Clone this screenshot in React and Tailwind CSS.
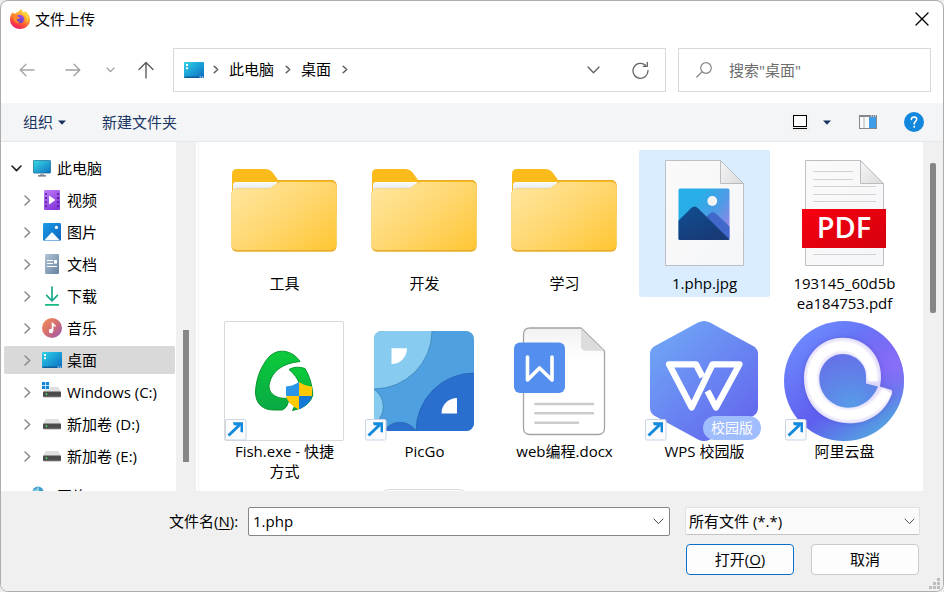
import React from 'react';

/* ---------- small line icons ---------- */

function Stroke({ w, h, d, className, sw = 1.3, join = 'round' }) {
  return (
    <svg width={w} height={h} viewBox={`0 0 ${w} ${h}`} fill="none" stroke="currentColor" strokeWidth={sw} strokeLinecap="round" strokeLinejoin={join} className={`shrink-0 ${className || ''}`} aria-hidden="true">
      <path d={d} />
    </svg>
  );
}

const ArrowLeft = () => <Stroke w={16} h={14} d="M15 7H1.5M7 1.2L1.2 7L7 12.8" className="text-[#a6a6a6]" />;
const ArrowRight = () => <Stroke w={16} h={14} d="M1 7h13.5M9 1.2L14.8 7L9 12.8" className="text-[#a0a0a0]" />;
const ArrowUp = () => <Stroke w={16} h={18} d="M8 17V1.8M1 8.5L8 1.5l7 7" className="text-[#5c5c5c]" sw={1.4} />;
const CrumbChevron = () => <Stroke w={6} h={9} d="M1.2 1.2L4.7 4.5L1.2 7.8" className="text-[#5a5a5a]" sw={1.5} />;
const TreeChevron = () => <Stroke w={7} h={11} d="M1 1l4.7 4.5L1 10" className="text-[#8a8a8a]" sw={1.5} />;
const ComboChevron = ({ className }) => <Stroke w={11} h={7} d="M1 1l4.5 4.6L10 1" className={className} sw={1} />;
const Caret = () => (
  <svg width="8" height="5" viewBox="0 0 8 5" aria-hidden="true"><path d="M0 0.5h8L4 4.7z" fill="#17335f" /></svg>
);

function Firefox() {
  return (
    <svg width="20" height="20" viewBox="0 0 20 20" aria-hidden="true">
      <defs>
        <linearGradient id="ffo" x1="0.8" y1="0" x2="0.3" y2="1">
          <stop offset="0" stopColor="#ffe14a" />
          <stop offset="0.4" stopColor="#ffa02a" />
          <stop offset="0.75" stopColor="#ff4a3c" />
          <stop offset="1" stopColor="#e8146e" />
        </linearGradient>
        <linearGradient id="ffi" x1="0.7" y1="0" x2="0.3" y2="1">
          <stop offset="0" stopColor="#a452ee" />
          <stop offset="1" stopColor="#5a3fb8" />
        </linearGradient>
      </defs>
      <path d="M2.6 3.2C3 4.2 4 4.6 5 4.7C6 3.5 7.4 3.3 8 3.3C8.600 2 9.800 1 11.600 0C11.600 1.600 12.600 2.400 14.200 3.400C14.600 2.900 14.800 2.500 14.800 2C18 4.200 20 7.200 20 10.800C20 16 15.600 20 10 20S0 16 0 10.600C0 7.600 1 5 2.600 3.200z" fill="url(#ffo)" />
      <path d="M10.500 1.500Q11.500 4.500 14.800 6.200Q18 9 16 14Q20 10 17.500 5.500Q16 4 14.800 3.400Q12 3.200 10.500 1.500z" fill="#ffd83f" />
      <path d="M7 6.600C8.600 5 12.200 5.400 13.600 8C14.900 10.900 13.200 14.200 10 14.200C7 14.200 5.400 12 5.800 9.600C6.800 10.200 8.600 10 9.600 8.900C8.600 8.700 7.400 7.800 7 6.600z" fill="url(#ffi)" />
      <path d="M3.200 8.200C4.600 6.400 7 6.800 9.900 8.700C8.800 10 7.600 10 6.600 10.200C6.800 12 8.400 13.200 10.400 12.600C8.600 15.400 3.600 13.600 3.200 8.200z" fill="#ff8a2c" />
    </svg>
  );
}

function DesktopIcon({ id }) {
  return (
    <svg width="20" height="16" viewBox="0 0 20 16" className="shrink-0" aria-hidden="true">
      <defs>
        <linearGradient id={id} x1="0" y1="0" x2="1" y2="1">
          <stop offset="0" stopColor="#30d3e4" />
          <stop offset="0.5" stopColor="#1a9fd6" />
          <stop offset="1" stopColor="#0f68bd" />
        </linearGradient>
      </defs>
      <rect width="20" height="16" rx="1" fill={`url(#${id})`} />
      <path d="M0.4 15.2h15" stroke="#0b4b83" />
      <path d="M15.6 15h1.2M17.8 15h1.2" stroke="#e6f4ff" />
      <path d="M2 2h2v2H2zM2 5.2h2v2H2z" fill="#fff" />
    </svg>
  );
}

/* ---------- navigation tree icons ---------- */

const PcIcon = () => (
  <svg width="18" height="17" viewBox="0 0 18 17" aria-hidden="true">
    <defs>
      <linearGradient id="pc" x1="0" y1="0" x2="1" y2="1">
        <stop offset="0" stopColor="#36dbe2" />
        <stop offset="1" stopColor="#1172c4" />
      </linearGradient>
    </defs>
    <rect x="0.4" y="0.4" width="17.2" height="12.6" rx="0.8" fill="url(#pc)" stroke="#17709a" strokeWidth="0.8" />
    <path d="M7 13.4h4v2H7z" fill="#a9b2ba" />
    <path d="M5 15.8h8" stroke="#5d666e" strokeWidth="1.2" />
  </svg>
);

const VideoIcon = () => (
  <svg width="16" height="20" viewBox="0 0 16 20" aria-hidden="true">
    <defs>
      <linearGradient id="vid" x1="0" y1="0" x2="0.6" y2="1">
        <stop offset="0" stopColor="#c07df6" />
        <stop offset="1" stopColor="#8638dd" />
      </linearGradient>
    </defs>
    <rect width="16" height="20" rx="1.2" fill="url(#vid)" />
    <path d="M2 3v15M14 3v15" stroke="#4b1c86" strokeWidth="1.600" strokeDasharray="1.800 2.300" />
    <path d="M5 5.6v8.8L11.4 10z" fill="#fff" />
  </svg>
);

const PictureIcon = () => (
  <svg width="18" height="18" viewBox="0 0 18 18" aria-hidden="true">
    <defs>
      <linearGradient id="pic" x1="0" y1="0" x2="1" y2="1">
        <stop offset="0" stopColor="#1b9be8" />
        <stop offset="1" stopColor="#0c62bd" />
      </linearGradient>
    </defs>
    <rect width="18" height="18" rx="1.4" fill="url(#pic)" />
    <path d="M1 17.4L8.3 9.8Q9 9.1 9.7 9.8L17 17.4z" fill="#f4faff" />
    <circle cx="13.4" cy="4.4" r="1.6" fill="#fff" />
  </svg>
);

const DocumentIcon = () => (
  <svg width="14" height="20" viewBox="0 0 14 20" aria-hidden="true">
    <defs>
      <linearGradient id="doc" x1="0" y1="0" x2="1" y2="1">
        <stop offset="0" stopColor="#b4c6d8" />
        <stop offset="1" stopColor="#63809f" />
      </linearGradient>
    </defs>
    <rect width="14" height="20" rx="1.2" fill="url(#doc)" />
    <path d="M2 6.500h6M2 9.500h6M2 12.500h10" stroke="#fff" strokeWidth="1.200" />
    <path d="M9 6h3v3.6H9z" fill="#fff" />
  </svg>
);

const DownloadIcon = () => (
  <svg width="14" height="20" viewBox="0 0 14 20" fill="none" aria-hidden="true">
    <path d="M7 1v13.4M1.6 9.4L7 14.8l5.4-5.4" stroke="#1da98d" strokeWidth="1.7" strokeLinecap="round" strokeLinejoin="round" />
    <path d="M0.6 18.8h12.8" stroke="#18b987" strokeWidth="1.8" strokeLinecap="round" />
  </svg>
);

const MusicIcon = () => (
  <svg width="20" height="20" viewBox="0 0 20 20" aria-hidden="true">
    <defs>
      <linearGradient id="mus" x1="0.1" y1="0.1" x2="0.9" y2="0.9">
        <stop offset="0" stopColor="#f08a5a" />
        <stop offset="0.5" stopColor="#d46e72" />
        <stop offset="1" stopColor="#a35aa8" />
      </linearGradient>
    </defs>
    <circle cx="10" cy="10" r="10" fill="url(#mus)" />
    <circle cx="9" cy="13" r="2.2" fill="#fff" />
    <path d="M9.7 13V4.4h1.6c.2 1.4 1 2.2 2.3 2.4v2c-1 0-1.8-.3-2.2-.7V13z" fill="#fff" />
  </svg>
);

function DriveIcon({ system }) {
  return (
    <svg width="20" height="20" viewBox="0 0 20 20" aria-hidden="true">
      {system && <path d="M0 0h3.2v3.2H0zM3.9 0h3.2v3.2H3.9zM0 3.9h3.2v3.2H0zM3.9 3.9h3.2v3.2H3.9z" fill="#0f87dd" />}
      <path d={system ? 'M8 5h8.2L19 10H1l2.4-2.4H8z' : 'M4 5h12.2L19 10H1z'} fill="#dfe0e2" />
      <rect x="1" y="9.6" width="18" height="5.6" rx="0.8" fill="#4b4b4b" />
      <path d="M1 14.4h18" stroke="#777" strokeWidth="0.8" />
      <circle cx="4.5" cy="12" r="0.9" fill="#3fe34e" />
    </svg>
  );
}

const NetworkIcon = () => (
  <svg width="20" height="20" viewBox="0 0 20 20" aria-hidden="true">
    <circle cx="6" cy="6" r="5.6" fill="#3f9fcb" />
    <path d="M1 4Q4 5 6 0.6Q8 4 6 8Q3 9 1 6z" fill="#8fd0ea" />
    <rect x="4" y="8" width="14" height="9" rx="1" fill="#1b7fcb" />
  </svg>
);

/* ---------- large file icons ---------- */

function Big({ children }) {
  return <svg width="120" height="120" viewBox="0 0 120 120" className="block overflow-visible" aria-hidden="true">{children}</svg>;
}

function Folder({ id }) {
  return (
    <Big>
      <defs>
        <linearGradient id={id} x1="0" y1="0.1" x2="1" y2="0.95">
          <stop offset="0" stopColor="#ffe59c" />
          <stop offset="0.5" stopColor="#ffd76f" />
          <stop offset="1" stopColor="#ffc736" />
        </linearGradient>
        <linearGradient id={`${id}w`} x1="0" y1="0" x2="0" y2="1">
          <stop offset="0" stopColor="#fbfcfc" />
          <stop offset="1" stopColor="#dfe4e6" />
        </linearGradient>
      </defs>
      <path d="M7 42V21Q7 16 12 16H40Q45 16 48 20L53 27H106Q111.500 27 111.500 33V60H7z" fill="#fbbb1b" />
      <path d="M53 27.500H106Q111 27.500 111.300 33" stroke="#e5a92c" strokeWidth="1" fill="none" />
      <path d="M8 38V32Q8 29 11 29H53L45 38z" fill={`url(#${id}w)`} />
      <path d="M6.500 41Q6.500 36 11.500 35.500H42Q46 35.500 49 32.500Q52.500 29 57 29H106Q111.500 29 111.500 34V93Q111.500 98.700 106 98.700H12Q6.500 98.700 6.500 93z" fill="#e9ad2e" />
      <path d="M6.500 41Q6.500 36 11.500 35.500H42Q46 35.500 49 32.500Q52.500 29 57 29H106Q111.500 29 111.500 34V92Q111.500 97 106 97H12Q6.500 97 6.500 92z" fill={`url(#${id})`} />
    </Big>
  );
}

function Page({ id }) {
  return (
    <>
      <defs>
        <linearGradient id={id} x1="0" y1="0" x2="1" y2="1">
          <stop offset="0" stopColor="#fafafa" />
          <stop offset="1" stopColor="#f5f6f8" />
        </linearGradient>
        <linearGradient id={`${id}f`} x1="0" y1="0.3" x2="1" y2="1">
          <stop offset="0" stopColor="#f2f2f2" />
          <stop offset="1" stopColor="#dadada" />
        </linearGradient>
      </defs>
      <path d="M20.500 7.500H75.500L98.500 30.500V112.500H20.500z" fill={`url(#${id})`} stroke="#bcc0c4" />
      <path d="M75.500 7.500V30.500H98.500z" fill={`url(#${id}f)`} stroke="#b9bcc0" />
    </>
  );
}

const ImageFile = () => (
  <Big>
    <Page id="pgi" />
    <defs>
      <linearGradient id="sky" x1="0.3" y1="0.3" x2="1" y2="0.8">
        <stop offset="0" stopColor="#27aee8" />
        <stop offset="0.5" stopColor="#4f9be6" />
        <stop offset="1" stopColor="#9a83e6" />
      </linearGradient>
      <linearGradient id="hill" x1="0" y1="0" x2="0.6" y2="1">
        <stop offset="0" stopColor="#104f92" />
        <stop offset="1" stopColor="#183a76" />
      </linearGradient>
      <clipPath id="shot"><rect x="33.500" y="35.500" width="51" height="51.500" rx="1.500" /></clipPath>
    </defs>
    <g clipPath="url(#shot)">
      <rect x="33" y="35" width="52" height="52" fill="url(#sky)" />
      <path d="M50 76L64 61Q67.500 57.500 71.500 61L85 74V87H50z" fill="#4169cb" />
      <path d="M33 68L46 55.200Q49.500 52 53 55.200L84.500 86.500V87H33z" fill="url(#hill)" />
      <circle cx="67.300" cy="48" r="4.900" fill="#f3f3f3" />
    </g>
  </Big>
);

const PdfFile = () => (
  <Big>
    <Page id="pgp" />
    <path d="M28 18.500H68M28 26.500H68M28 33.500H91M28 41.500H91M28 48.500H91M28 101.500H91" stroke="#d0d2d4" />
    <defs>
      <linearGradient id="pdf" x1="0" y1="0" x2="1" y2="1">
        <stop offset="0" stopColor="#f7000f" />
        <stop offset="1" stopColor="#d4000e" />
      </linearGradient>
    </defs>
    <rect x="17" y="56" width="84" height="39" fill="url(#pdf)" />
    <text x="59" y="85" textAnchor="middle" fill="#fff" fontSize="29" fontWeight="600" fontFamily="'Open Sans', sans-serif">PDF</text>
  </Big>
);

function ShortcutMark() {
  return (
    <g>
      <rect x="0.500" y="98.500" width="20.500" height="20.500" rx="1.500" fill="#fbfcfe" stroke="#ccd5e6" />
      <path d="M3.500 114.500L14.500 104" stroke="#1289dc" strokeWidth="3" />
      <path d="M8 101.300H18V111.500L15.500 111V104.800L8.800 104.200z" fill="#1289dc" />
    </g>
  );
}

const FishApp = () => (
  <Big>
    <defs>
      <linearGradient id="fg" x1="0" y1="0" x2="0" y2="1">
        <stop offset="0" stopColor="#0ccb3a" />
        <stop offset="1" stopColor="#08a944" />
      </linearGradient>
      <clipPath id="shield"><path d="M74 61Q80 65 87 65.500V74Q86 83 74 88.500Q62 83 61 74V65.500Q68 65 74 61z" /></clipPath>
    </defs>
    <rect x="-0.500" y="0.500" width="119" height="119" rx="1.500" fill="#fff" stroke="#d9d9d9" />
    <path d="M75 40.500C69 31 54 25 43.500 36.500C36 45 31 58 30.500 71C30.500 83 38 89 49 89H57Q63 87 64 77C50 79 42 71 44.500 62C47 51 57 42 75 40.500z" fill="url(#fg)" stroke="#08952c" />
    <path d="M64 48.500Q71 44.500 80 47.500Q87 59 87.800 74Q85 86 67.500 89.500Q73 80 75 64Q72 55 64 48.500z" fill="url(#fg)" stroke="#08952c" />
    <g clipPath="url(#shield)">
      <path d="M60 60h14v15H60z" fill="#2a94e6" />
      <path d="M74 60h14v15H74z" fill="#ffc905" />
      <path d="M60 75h14v15H60z" fill="#ffc905" />
      <path d="M74 75h14v15H74z" fill="#1478d6" />
    </g>
    <ShortcutMark />
  </Big>
);

const PicGoApp = () => (
  <Big>
    <defs>
      <clipPath id="pgc"><rect x="9" y="10" width="100" height="100" rx="8" /></clipPath>
    </defs>
    <g clipPath="url(#pgc)">
      <rect x="9" y="10" width="100" height="100" fill="#4ea0e0" />
      <g strokeWidth="0.800">
        <circle cx="9" cy="10" r="58" fill="#87cbf0" stroke="#3b83b8" />
        <circle cx="-2.800" cy="85.700" r="21.100" fill="#87cbf0" stroke="#3b83b8" />
        <circle cx="109" cy="110" r="58" fill="#2a6fcd" stroke="#2867b4" />
        <circle cx="35" cy="120.300" r="19" fill="#2a6fcd" stroke="#2867b4" />
      </g>
      <path d="M26.500 27.300H42A15.500 15.500 0 0 1 26.500 43z" fill="#fff" />
      <path d="M92 77V92.500H76.500A15.500 15.500 0 0 1 92 77z" fill="#fff" />
    </g>
    <ShortcutMark />
  </Big>
);

const DocxFile = () => (
  <Big>
    <defs>
      <linearGradient id="dxp" x1="0" y1="0" x2="0" y2="1">
        <stop offset="0" stopColor="#f2f2f2" />
        <stop offset="0.300" stopColor="#ffffff" />
      </linearGradient>
    </defs>
    <path d="M25 7H76L99.500 30V107Q99.500 113.500 93 113.500H25Q18.500 113.500 18.500 107V13.500Q18.500 7 25 7z" fill="url(#dxp)" stroke="#a3a3a3" strokeWidth="1.300" />
    <path d="M76 7.500V25Q76 29.700 81 29.700H99z" fill="#dcdcdc" />
    <rect x="9" y="21.500" width="51" height="50.500" rx="6" fill="#548ff0" />
    <path d="M22.500 36V59L34.500 47L47 59V36" fill="none" stroke="#fff" strokeWidth="3.600" strokeLinecap="round" strokeLinejoin="round" />
    <path d="M30.500 83H88M30.500 92.300H88M30.500 101.700H73" stroke="#cbcbcb" strokeWidth="2.600" strokeLinecap="round" />
  </Big>
);

const WpsApp = () => (
  <Big>
    <defs>
      <linearGradient id="wps" x1="0.100" y1="0.100" x2="0.800" y2="0.900">
        <stop offset="0" stopColor="#6fa4f6" />
        <stop offset="1" stopColor="#646bee" />
      </linearGradient>
    </defs>
    <path d="M53 1.600Q59 -1.500 65 1.600L109 25.500Q113 28 113 33V87Q113 92 109 94.500L65 118.500Q59 121.500 53 118.500L9 94.500Q5 92 5 87V33Q5 28 9 25.500z" fill="url(#wps)" />
    <path d="M57.500 56L51 43.300H24L46.700 86.500L67.500 43.300H94.500L71 86.500L62.500 70" fill="none" stroke="#fff" strokeWidth="6.300" strokeLinejoin="round" />
    <rect x="58" y="95" width="58" height="24" rx="12" fill="#9fbcfd" />
    <text x="87" y="112" textAnchor="middle" fill="#fff" fontSize="14" fontFamily="'Noto Sans CJK SC', sans-serif">校园版</text>
    <ShortcutMark />
  </Big>
);

const AliApp = () => (
  <Big>
    <defs>
      <linearGradient id="ali" x1="0.150" y1="0.150" x2="0.750" y2="0.950">
        <stop offset="0" stopColor="#6c86fc" />
        <stop offset="0.600" stopColor="#5f5eee" />
        <stop offset="1" stopColor="#55a0e2" />
      </linearGradient>
      <radialGradient id="alig" cx="0.920" cy="0.350" r="0.400">
        <stop offset="0" stopColor="#8b6ff8" />
        <stop offset="1" stopColor="#8b6ff8" stopOpacity="0" />
      </radialGradient>
      <radialGradient id="alic" cx="0.550" cy="0.950" r="0.900">
        <stop offset="0" stopColor="#579be8" />
        <stop offset="1" stopColor="#6573e8" />
      </radialGradient>
      <filter id="alib" x="-0.200" y="-0.200" width="1.400" height="1.400"><feGaussianBlur stdDeviation="2.500" /></filter>
      <clipPath id="ring">
        <path d="M19 57.300C19 34 36 16.700 57.700 16.700C80 16.700 97 34 96 57.500L95 65.500L106.700 69Q108 71 106 75C99 92 83 103 63.300 102.300C36 101 19 82 19 57.300z" />
      </clipPath>
    </defs>
    <circle cx="59" cy="60" r="60" fill="url(#ali)" />
    <circle cx="59" cy="60" r="60" fill="url(#alig)" />
    <path d="M19 57.300C19 34 36 16.700 57.700 16.700C80 16.700 97 34 96 57.500L95 65.500L106.700 69Q108 71 106 75C99 92 83 103 63.300 102.300C36 101 19 82 19 57.300z" fill="#4536b4" opacity="0.350" filter="url(#alib)" />
    <g clipPath="url(#ring)">
      <path d="M15 12H110V106H15z" fill="#d8d2fa" />
      <path d="M88 60C88 39 74 25 57.700 25C40 25 27 39 27 57.500C27 78 43 94 63.300 94Q89 94 102 70" fill="none" stroke="#fff" strokeWidth="13" filter="url(#alib)" />
      <path d="M88 60C88 39 74 25 57.700 25C40 25 27 39 27 57.500C27 78 43 94 63.300 94Q89 94 102 70" fill="none" stroke="#fff" strokeWidth="9" />
    </g>
    <path d="M34.300 58C34.300 44 45 33 57.700 33C71 33 82 44 81 56V62.500L93 65.500C88 78 77 86.700 63.300 86.700C47 86.700 34.300 73 34.300 58z" fill="url(#alic)" />
    <ShortcutMark />
  </Big>
);

const NextFile = () => (
  <Big>
    <rect x="16.500" y="0.500" width="85" height="112" rx="7" fill="#fafafa" stroke="#dddddd" />
  </Big>
);

/* ---------- data ---------- */

const places = [
  { name: '视频', icon: <VideoIcon /> },
  { name: '图片', icon: <PictureIcon /> },
  { name: '文档', icon: <DocumentIcon /> },
  { name: '下载', icon: <DownloadIcon /> },
  { name: '音乐', icon: <MusicIcon /> },
  { name: '桌面', icon: <DesktopIcon id="dt2" />, selected: true },
  { name: 'Windows (C:)', icon: <DriveIcon system /> },
  { name: '新加卷 (D:)', icon: <DriveIcon /> },
  { name: '新加卷 (E:)', icon: <DriveIcon /> },
];

const files = [
  { name: '工具', icon: <Folder id="fd1" /> },
  { name: '开发', icon: <Folder id="fd2" /> },
  { name: '学习', icon: <Folder id="fd3" /> },
  { name: '1.php.jpg', icon: <ImageFile />, selected: true },
  { name: '193145_60d5bea184753.pdf', icon: <PdfFile /> },
  { name: 'Fish.exe - 快捷方式', icon: <FishApp /> },
  { name: 'PicGo', icon: <PicGoApp /> },
  { name: 'web编程.docx', icon: <DocxFile /> },
  { name: 'WPS 校园版', icon: <WpsApp /> },
  { name: '阿里云盘', icon: <AliApp /> },
];

/* ---------- sections ---------- */

function TitleBar() {
  return (
    <header className="flex h-9 shrink-0 items-center pr-[11px] pl-[9px]">
      <Firefox />
      <h1 className="ml-[5px] flex-1">文件上传</h1>
      <button type="button" aria-label="关闭" className="flex size-5 items-center justify-center">
        <Stroke w={14} h={14} d="M1 1l12 12M13 1L1 13" sw={1.3} className="text-black" />
      </button>
    </header>
  );
}

function NavBar() {
  return (
    <nav className="mt-[11px] mb-[11px] flex h-11 shrink-0 items-center pr-3 pl-[3px]">
      <button type="button" aria-label="后退" className="flex h-8 w-[46px] items-center justify-center"><ArrowLeft /></button>
      <button type="button" aria-label="前进" className="flex h-8 w-[46px] items-center justify-center"><ArrowRight /></button>
      <button type="button" aria-label="最近位置" className="flex h-8 w-7 items-center justify-center">
        <Stroke w={9} h={6} d="M1 1l3.5 3.6L8 1" className="text-[#a0a0a0]" sw={1.3} />
      </button>
      <button type="button" aria-label="向上" className="flex h-8 w-11 items-center justify-center"><ArrowUp /></button>
      <div className="ml-[5px] flex h-11 flex-1 items-center border border-[#d9d9d9] pr-4 pl-[10px]">
        <DesktopIcon id="dt1" />
        <span className="ml-[9px] flex flex-1 items-center gap-[10px] pb-0.5">
          <CrumbChevron />
          <button type="button" className="mr-px">此电脑</button>
          <CrumbChevron />
          <button type="button" className="mr-px">桌面</button>
          <CrumbChevron />
        </span>
        <button type="button" aria-label="历史记录" className="mr-8 p-0"><Stroke w={13} h={8} d="M1 1l5.500 5.700L12 1" className="text-[#666]" sw={1.4} /></button>
        <button type="button" aria-label="刷新">
          <svg width="17" height="18" viewBox="0 0 17 18" fill="none" stroke="#666" strokeWidth="1.300" strokeLinecap="round" strokeLinejoin="round" aria-hidden="true">
            <path d="M16 9.500A7.500 7.500 0 1 1 13.500 4.200M15.300 1.300V5.300H11.300" />
          </svg>
        </button>
      </div>
      <div className="ml-3 flex h-11 w-[253px] items-center border border-[#d9d9d9] pr-3 pl-[17px]">
        <svg width="16" height="16" viewBox="0 0 16 16" fill="none" stroke="#858585" strokeWidth="1.200" strokeLinecap="round" className="shrink-0" aria-hidden="true">
          <circle cx="10" cy="6" r="5.300" />
          <path d="M6 9.800L0.800 15" />
        </svg>
        <input type="search" aria-label="搜索" placeholder={'搜索"桌面"'} className="ml-[17px] w-full min-w-0 bg-transparent outline-none placeholder:text-[#6d6d6d]" />
      </div>
    </nav>
  );
}

function Toolbar() {
  return (
    <div className="flex h-[39px] shrink-0 items-center border-b border-[#e5e7e9] bg-[#f4f5f7] pr-[19px] pl-[22px] text-[#1a3763]">
      <button type="button" className="flex items-center gap-[5px]">组织 <Caret /></button>
      <button type="button" className="ml-9">新建文件夹</button>
      <span className="flex-1" />
      <button type="button" aria-label="更改视图" className="flex h-5 w-[19px] items-center justify-center bg-[#f1f1f1]">
        <svg width="15" height="15" viewBox="0 0 15 15" fill="none" stroke="#000" aria-hidden="true">
          <rect x="0.500" y="0.500" width="13" height="11" fill="#fff" />
          <path d="M0 13.500H14" />
        </svg>
      </button>
      <button type="button" aria-label="视图选项" className="mx-3 flex h-5 w-[10px] items-center justify-center"><Caret /></button>
      <button type="button" aria-label="预览窗格" className="ml-[15px]">
        <svg width="18" height="14" viewBox="0 0 18 14" aria-hidden="true">
          <rect x="0.500" y="0.500" width="17" height="13" fill="#fafafa" stroke="#85888c" />
          <path d="M0.500 1.200H17.500" stroke="#85888c" strokeWidth="1.500" />
          <path d="M5 2v11" stroke="#b2b5b9" />
          <rect x="10" y="2" width="7" height="11" fill="#3f9ce8" />
          <path d="M12 1h1M14 1h1M16 1h1" stroke="#fff" />
        </svg>
      </button>
      <button type="button" aria-label="帮助" className="ml-[27px]">
        <svg width="20" height="20" viewBox="0 0 20 20" aria-hidden="true">
          <circle cx="10" cy="10" r="10" fill="#1287dc" />
          <path d="M7.300 7.600Q7.500 5 10.100 5Q12.700 5.100 12.700 7.300C12.700 9.300 10.200 9.500 10.200 12" fill="none" stroke="#fff" strokeWidth="1.500" strokeLinecap="round" />
          <circle cx="10.200" cy="14.800" r="1" fill="#fff" />
        </svg>
      </button>
    </div>
  );
}

function Tree() {
  return (
    <aside className="w-[175px] shrink-0 overflow-hidden px-[3px] pt-3">
      <ul className="flex w-[171px] flex-col gap-1">
        <li>
          <button type="button" aria-expanded="true" className="flex h-7 w-full items-center pl-[7px]">
            <Stroke w={11} h={7} d="M1 1l4.500 4.600L10 1" sw={1.6} className="text-[#222]" />
            <span className="mr-[6px] ml-[11px]"><PcIcon /></span>
            此电脑
          </button>
        </li>
        {places.map((p) => (
          <li key={p.name}>
            <button type="button" aria-expanded="false" className={`flex h-7 w-full items-center rounded-xs pl-5 ${p.selected ? 'bg-[#d9d9d9]' : ''}`}>
              <TreeChevron />
              <span className="mr-[5px] ml-[11px] flex w-5 shrink-0 justify-center">{p.icon}</span>
              <span className="whitespace-nowrap">{p.name}</span>
            </button>
          </li>
        ))}
        <li className="mt-2">
          <button type="button" aria-expanded="false" className="flex h-7 w-full items-center pl-[28px]">
            <span className="mr-[5px]"><NetworkIcon /></span>
            网络
          </button>
        </li>
      </ul>
    </aside>
  );
}

function FileGrid() {
  return (
    <main className="flex-1 overflow-hidden pt-2 pl-[23px]">
      <ul className="grid grid-cols-[repeat(auto-fill,131px)] items-start gap-x-[9px] gap-y-px">
        {files.map((f) => (
          <li key={f.name}>
            <button type="button" className={`flex w-full flex-col items-center rounded-xs pt-[3px] pb-1 leading-5 ${f.selected ? 'bg-[#d9edff]' : ''}`}>
              {f.icon}
              <span className="w-[108px] text-center break-all">{f.name}</span>
            </button>
          </li>
        ))}
        <li />
        <li className="flex justify-center pt-[3px]"><NextFile /></li>
      </ul>
    </main>
  );
}

function Footer() {
  return (
    <footer className="flex shrink-0 flex-col gap-2 bg-[#f0f0f0] pt-4 pr-[23px] pb-4">
      <div className="flex h-[29px] items-start">
        <label htmlFor="filename" className="ml-[168px] w-[71px] shrink-0 leading-7 whitespace-nowrap">文件名(<u className="underline-offset-2">N</u>):</label>
        <div className="ml-2 flex h-[29px] flex-1 items-center rounded-xs border border-[#868686] bg-white pr-[5px] pl-1">
          <input id="filename" type="text" defaultValue="1.php" className="h-full min-w-0 flex-1 bg-transparent pb-0.5 outline-none" />
          <button type="button" aria-label="历史文件名"><ComboChevron className="text-[#444]" /></button>
        </div>
        <div className="relative ml-[15px] w-[235px]">
          <select aria-label="文件类型" className="h-7 w-full appearance-none rounded-xs border border-[#e0e0e0] border-b-[#c4c4c4] bg-[#fbfbfb] pl-[3px] outline-none">
            <option>所有文件 (*.*)</option>
          </select>
          <span className="pointer-events-none absolute inset-y-0 right-[5px] flex items-center"><ComboChevron className="text-[#555]" /></span>
        </div>
      </div>
      <div className="flex justify-end gap-[17px] pr-px">
        <button type="button" className="h-[31px] w-[108px] rounded-sm border border-[#0a6fc6] bg-[#fdfdfd] pb-0.5">打开(<u className="underline-offset-2">O</u>)</button>
        <button type="button" className="h-[31px] w-[108px] rounded-sm border border-[#cbcbcb] bg-[#fdfdfd] pb-0.5">取消</button>
      </div>
    </footer>
  );
}

function ResizeGrip() {
  return (
    <svg width="11" height="11" viewBox="0 0 11 11" className="pointer-events-none absolute right-[3px] bottom-[2px]" fill="#bdbdbd" aria-hidden="true">
      <path d="M8 0h3v3H8zM4 4h3v3H4zM8 4h3v3H8zM0 8h3v3H0zM4 8h3v3H4zM8 8h3v3H8z" />
    </svg>
  );
}

export default function App() {
  return (
    <div className="h-screen bg-[#ebebeb] font-['Open_Sans','Noto_Sans_CJK_SC',sans-serif] text-[15px] leading-5 text-black">
      <div className="relative flex h-full flex-col overflow-hidden rounded-lg border border-[#adadad] bg-white">
        <TitleBar />
        <NavBar />
        <Toolbar />
        <div className="flex min-h-0 flex-1">
          <Tree />
          <div className="w-5 shrink-0 bg-[#f0f0f0] pt-[188px] pl-[7px]"><div className="h-[132px] w-[6px] bg-[#868686]" /></div>
          <div className="ml-[2px] w-px shrink-0 bg-[#f3f3f3]" />
          <div className="-ml-[3px] flex min-w-0 flex-1"><FileGrid /></div>
          <div className="w-5 shrink-0 bg-[#f0f0f0] pt-[21px] pl-[7px]"><div className="h-[150px] w-[6px] rounded-xs bg-[#868686]" /></div>
        </div>
        <Footer />
        <ResizeGrip />
      </div>
    </div>
  );
}
